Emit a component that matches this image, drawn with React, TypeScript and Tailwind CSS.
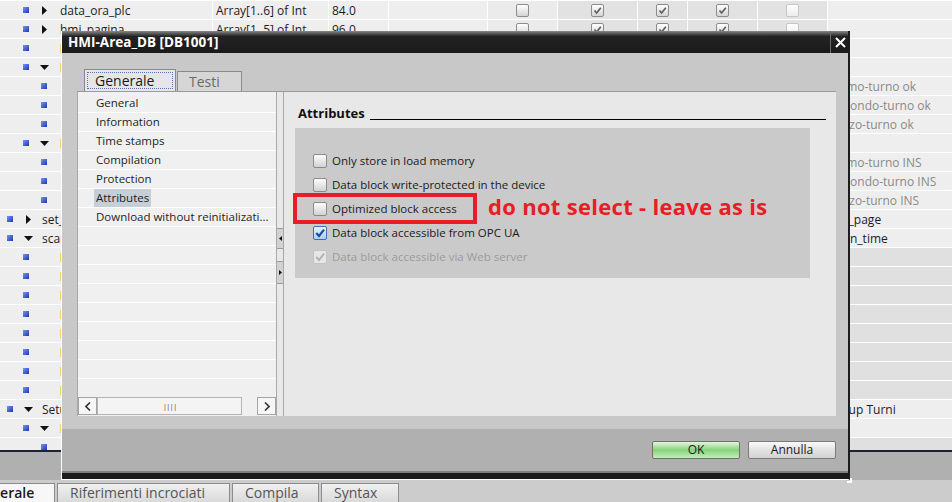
import React from 'react';

type TreeRow = {
  level: 0 | 1 | 2;
  arrow?: 'right' | 'down';
  name?: string;
  icon?: boolean;
  type?: string;
  start?: string;
  checks?: boolean;
  comment?: string;
  muted?: boolean;
  shade?: boolean;
};

const rows: TreeRow[] = [
  { level: 1, arrow: 'right', name: 'data_ora_plc', type: 'Array[1..6] of Int', start: '84.0', checks: true },
  { level: 1, arrow: 'right', name: 'hmi_pagina', type: 'Array[1..5] of Int', start: '96.0', checks: true },
  { level: 1, icon: true, name: 'hmi_turno' },
  { level: 1, arrow: 'down', icon: true, name: 'turni_ok' },
  { level: 2, comment: 'Primo-turno ok', muted: true },
  { level: 2, comment: 'Secondo-turno ok', muted: true },
  { level: 2, comment: 'Terzo-turno ok', muted: true },
  { level: 1, arrow: 'down', icon: true, name: 'turni_ins' },
  { level: 2, comment: 'Primo-turno INS', muted: true },
  { level: 2, comment: 'Secondo-turno INS', muted: true },
  { level: 2, comment: 'Terzo-turno INS', muted: true },
  { level: 0, arrow: 'right', name: 'set_page', comment: 'Set_page' },
  { level: 0, arrow: 'down', name: 'scan_time', comment: 'Scan_time' },
  { level: 1, icon: true, shade: true },
  { level: 1, icon: true, shade: true },
  { level: 1, icon: true, shade: true },
  { level: 1, icon: true, shade: true },
  { level: 1, icon: true, shade: true },
  { level: 1, icon: true, shade: true },
  { level: 1, icon: true, shade: true },
  { level: 1, icon: true, shade: true },
  { level: 0, arrow: 'down', name: 'Setup_Turni', comment: 'Setup Turni' },
  { level: 1, arrow: 'down', icon: true },
  { level: 2, shade: true },
];

const menu = ['General', 'Information', 'Time stamps', 'Compilation', 'Protection', 'Attributes', 'Download without reinitializati...'];

const attributes = [
  { label: 'Only store in load memory', state: 'off' },
  { label: 'Data block write-protected in the device', state: 'off' },
  { label: 'Optimized block access', state: 'off' },
  { label: 'Data block accessible from OPC UA', state: 'on' },
  { label: 'Data block accessible via Web server', state: 'disabled' },
];

const Marker = () => (
  <span className="block w-[6px] h-[6px] bg-linear-to-br from-[#7d93ea] to-[#1d38ae]" />
);

const Arrow = ({ dir }: { dir: 'right' | 'down' }) =>
  dir === 'right' ? (
    <svg width="5" height="9" viewBox="0 0 5 9">
      <polygon points="0,0 5,4.5 0,9" fill="#111" />
    </svg>
  ) : (
    <svg width="9" height="5" viewBox="0 0 9 5">
      <polygon points="0,0 9,0 4.5,5" fill="#111" />
    </svg>
  );

const GridCheck = ({ checked, faded }: { checked?: boolean; faded?: boolean }) => (
  <div
    className={
      faded
        ? 'w-[13px] h-[13px] rounded-[2px] border border-[#c6c6c6] bg-linear-to-b from-white to-[#ececec]'
        : 'w-[13px] h-[13px] rounded-[2px] border border-[#8c8c8c] bg-linear-to-b from-white to-[#d4d4d4] flex items-center justify-center'
    }
  >
    {checked && (
      <svg width="11" height="11" viewBox="0 0 11 11">
        <path d="M2.5 5.5 L4.6 8 L8.8 2.8" stroke="#5c5c5c" strokeWidth="1.6" fill="none" />
      </svg>
    )}
  </div>
);

const TableRow = ({ row }: { row: TreeRow }) => {
  const pad = row.level === 0 ? 'pl-[1px]' : row.level === 1 ? 'pl-[17px]' : 'pl-[35px]';
  return (
    <div className="h-[19px] shrink-0 flex border-t border-white text-[12px] leading-[19px] text-[#1c1c1c] whitespace-nowrap">
      <div className={`w-[213px] shrink-0 border-r border-white bg-[#eeeeee] flex items-center overflow-hidden ${pad}`}>
        <span className="w-[18px] flex justify-center">
          <Marker />
        </span>
        {row.level < 2 && (
          <span className="w-[18px] flex justify-center">{row.arrow && <Arrow dir={row.arrow} />}</span>
        )}
        {row.icon && <span className="ml-[7px] w-[9px] h-[9px] bg-[#efd36d] shrink-0" />}
        {row.name && (
          <span className={row.level === 0 ? 'ml-[5px]' : row.icon ? 'ml-[3px]' : 'ml-[7px]'}>{row.name}</span>
        )}
      </div>
      <div className="w-[116px] shrink-0 border-r border-white bg-[#eeeeee] pl-[3px]">{row.type}</div>
      <div className="w-[60px] shrink-0 border-r border-white bg-[#eeeeee] pl-[3px]">{row.start}</div>
      <div className="w-[99px] shrink-0 border-r border-white bg-[#eeeeee]" />
      <div className="w-[70px] shrink-0 border-r border-white bg-[#ebebeb] flex items-center justify-center">
        {row.checks && <GridCheck />}
      </div>
      <div className="w-[80px] shrink-0 border-r border-white bg-[#e2e2e2] flex items-center justify-center">
        {row.checks && <GridCheck checked />}
      </div>
      <div className="w-[50px] shrink-0 border-r border-white bg-[#e2e2e2] flex items-center justify-center">
        {row.checks && <GridCheck checked />}
      </div>
      <div className="w-[70px] shrink-0 border-r border-white bg-[#e2e2e2] flex items-center justify-center">
        {row.checks && <GridCheck checked />}
      </div>
      <div className="w-[70px] shrink-0 border-r border-white bg-[#e2e2e2] flex items-center justify-center">
        {row.checks && <GridCheck faded />}
      </div>
      <div
        className={`flex-1 pl-[3px] overflow-hidden ${row.shade ? 'bg-[#e0e0e0]' : 'bg-[#eeeeee]'} ${
          row.muted ? 'text-[#8a8a8a]' : 'text-[#1c1c1c]'
        }`}
      >
        {row.comment}
      </div>
    </div>
  );
};

const DialogCheck = ({ state }: { state: string }) => {
  if (state === 'on')
    return (
      <div className="w-[14px] h-[14px] rounded-[2px] border border-[#3f6fa8] bg-linear-to-b from-[#eaf5fd] to-[#a9d0ee] flex items-center justify-center shrink-0">
        <svg width="12" height="12" viewBox="0 0 12 12">
          <path d="M2.3 6 L5 9 L10 2.6" stroke="#17509c" strokeWidth="2.2" fill="none" />
        </svg>
      </div>
    );
  if (state === 'disabled')
    return (
      <div className="w-[14px] h-[14px] rounded-[2px] border border-[#c4c4c4] bg-[#e6e6e6] flex items-center justify-center shrink-0">
        <svg width="12" height="12" viewBox="0 0 12 12">
          <path d="M2.3 6 L5 9 L10 2.6" stroke="#b4b4b4" strokeWidth="2" fill="none" />
        </svg>
      </div>
    );
  return (
    <div className="w-[14px] h-[14px] rounded-[2px] border border-[#8a8a8a] bg-linear-to-b from-[#fdfdfd] to-[#d2d2d2] shrink-0" />
  );
};

const Dialog = () => (
  <div className="absolute left-[61px] top-[31px] w-[789px] h-[449px] flex flex-col border-l border-l-white border-b border-b-white border-r-2 border-r-[#1c1c1c]">
    <div className="h-[22px] shrink-0 flex bg-linear-to-b from-[#8a8a8a] via-[#222222] via-25% to-[#1a1a1a]">
      <div className="flex-1 pl-[6px] pt-px flex items-center text-white text-[13.5px] font-bold">HMI-Area_DB [DB1001]</div>
      <div className="w-[18px] border-l border-[#6a6a6a] flex items-center justify-center pl-px">
        <svg width="11" height="11" viewBox="0 0 11 11">
          <path d="M1 1 L10 10 M10 1 L1 10" stroke="white" strokeWidth="2" />
        </svg>
      </div>
    </div>

    <div className="flex-1 bg-[#c8c8c8] flex flex-col">
      <div className="mt-[16px] h-[22px] shrink-0 flex items-end pl-[22px]">
        <div className="w-[92px] h-[22px] border border-b-0 border-[#8a8a8a] bg-[#e6e6e6] p-[2px]">
          <div className="h-full border border-dotted border-[#5a78b8] flex items-center pl-[7px] text-[14px] text-[#1a1a1a]">
            Generale
          </div>
        </div>
        <div className="ml-px w-[65px] h-[20px] border border-b-0 border-[#8a8a8a] bg-[#d6d6d6] flex items-center pl-[11px] text-[14px] text-[#6a6a6a]">
          Testi
        </div>
      </div>

      <div className="ml-[15px] mr-[12px] h-[325px] shrink-0 border-t border-[#9a9a9a] flex">
        <div className="w-[200px] shrink-0 bg-[#f0f0f0] border-x border-[#a8a8a8] flex flex-col">
          <div className="flex-1 overflow-hidden pt-[2px]">
            {menu.map((m) => (
              <div key={m} className="h-[19px] border-b border-white pl-[18px] text-[11.5px] leading-[18px] text-[#1e1e1e] whitespace-nowrap">
                {m === 'Attributes' ? <span className="-ml-[2px] px-[2px] bg-[#c6ced8] inline-block">{m}</span> : m}
              </div>
            ))}
            {Array.from({ length: 10 }).map((_, i) => (
              <div key={i} className="h-[19px] border-b border-white" />
            ))}
          </div>
          <div className="h-[18px] mb-px shrink-0 flex">
            <div className="w-[19px] border border-[#a4a4a4] bg-[#f6f6f6] flex items-center justify-center">
              <svg width="6" height="9" viewBox="0 0 6 9">
                <path d="M5 0.5 L1 4.5 L5 8.5" stroke="#333" strokeWidth="1.6" fill="none" />
              </svg>
            </div>
            <div className="w-[145px] border border-[#b4b4b4] bg-[#f4f4f4] flex items-center justify-center">
              <span className="text-[8px] leading-none tracking-[-1px] text-[#555]">||||</span>
            </div>
            <div className="flex-1" />
            <div className="w-[19px] border border-[#a4a4a4] bg-[#f6f6f6] flex items-center justify-center">
              <svg width="6" height="9" viewBox="0 0 6 9">
                <path d="M1 0.5 L5 4.5 L1 8.5" stroke="#333" strokeWidth="1.6" fill="none" />
              </svg>
            </div>
          </div>
        </div>

        <div className="w-[7px] shrink-0 bg-[#e8e8e8] border-r border-[#a8a8a8] flex flex-col">
          <div className="mt-[136px] h-[21px] bg-[#d2d2d2] border-y border-[#9c9c9c] flex items-center justify-center">
            <svg width="3" height="5" viewBox="0 0 3 5">
              <polygon points="3,0 0,2.5 3,5" fill="#111" />
            </svg>
          </div>
          <div className="mt-[12px] h-[23px] bg-[#d2d2d2] border-y border-[#9c9c9c] flex items-center justify-center">
            <svg width="3" height="5" viewBox="0 0 3 5">
              <polygon points="0,0 3,2.5 0,5" fill="#111" />
            </svg>
          </div>
        </div>

        <div className="flex-1 bg-[#e8e8e8] relative flex flex-col">
          <div className="mt-[13px] flex items-end pl-[14px] pr-[10px]">
            <span className="font-bold text-[13px] leading-[17px] text-[#111]">Attributes</span>
            <span className="flex-1 h-px bg-black ml-[5px] mb-[2px]" />
          </div>
          <div className="ml-[11px] mt-[6px] w-[515px] h-[150px] bg-[#cacaca] pt-[21px] pl-[18px] flex flex-col">
            {attributes.map((a) => (
              <div key={a.label} className="h-[24px] flex items-center gap-[5px]">
                <DialogCheck state={a.state} />
                <span className={`text-[11.5px] whitespace-nowrap ${a.state === 'disabled' ? 'text-[#9c9c9c]' : 'text-[#1a1a1a]'}`}>
                  {a.label}
                </span>
              </div>
            ))}
          </div>
          <div className="absolute left-[9px] top-[101px] w-[184px] h-[31px] border-4 border-[#ea1c26]" />
          <div className="absolute left-[204px] top-[100px] leading-[28px] font-bold text-[22px] tracking-[0.3px] text-[#ea1c26] whitespace-nowrap">
            do not select - leave as is
          </div>
        </div>
      </div>

      <div className="h-[13px] shrink-0" />
      <div className="h-[42px] shrink-0 bg-[#b0b0b0] flex justify-end items-start pt-[12px] pr-[12px] gap-[8px]">
        <button className="w-[88px] h-[18px] border border-[#6f6f6f] rounded-[2px] bg-linear-to-b from-[#e2f7dc] via-[#86d27c] to-[#c2efba] text-[12px] leading-none text-[#1a1a1a]">
          OK
        </button>
        <button className="w-[88px] h-[18px] border border-[#7a7a7a] rounded-[2px] bg-linear-to-b from-[#fafafa] via-[#e2e2e2] to-[#d2d2d2] text-[12px] leading-none text-[#1a1a1a]">
          Annulla
        </button>
      </div>
      <div className="h-[2px] shrink-0 bg-[#808080]" />
    </div>
    <div className="h-[6px] shrink-0 bg-[#1c1c1c]" />
    <div className="absolute right-[-4px] bottom-[-4px] w-[5px] h-[5px] border-r-2 border-b-2 border-white" />
  </div>
);

const BottomTabs = () => (
  <div className="h-[19px] shrink-0 flex gap-[2px] text-[14px] leading-[18px] whitespace-nowrap">
    <div className="ml-[-40px] w-[95px] border border-b-0 border-[#8c8c8c] bg-[#f7f7f7] pl-[12px] font-semibold text-[#1a1a1a]">
      Generale
    </div>
    <div className="w-[173px] border border-b-0 border-[#8c8c8c] bg-linear-to-b from-[#f0f0f0] to-[#dadada] pl-[12px] text-[#555]">
      Riferimenti incrociati
    </div>
    <div className="w-[87px] border border-b-0 border-[#8c8c8c] bg-linear-to-b from-[#f0f0f0] to-[#dadada] pl-[12px] text-[#555]">
      Compila
    </div>
    <div className="w-[78px] border border-b-0 border-[#8c8c8c] bg-linear-to-b from-[#f0f0f0] to-[#dadada] pl-[12px] text-[#555]">
      Syntax
    </div>
  </div>
);

export default function App() {
  return (
    <div className="relative w-[952px] h-[502px] overflow-hidden bg-[#cccccc] font-['Open_Sans',sans-serif] flex flex-col">
      <div className="h-[450px] shrink-0 overflow-hidden flex flex-col">
        {rows.map((r, i) => (
          <TableRow key={i} row={r} />
        ))}
      </div>
      <div className="h-[2px] shrink-0 bg-[#1e2133]" />
      <div className="h-[28px] shrink-0 bg-[#b0b0b0]" />
      <div className="h-[3px] shrink-0" />
      <BottomTabs />
      <Dialog />
    </div>
  );
}
